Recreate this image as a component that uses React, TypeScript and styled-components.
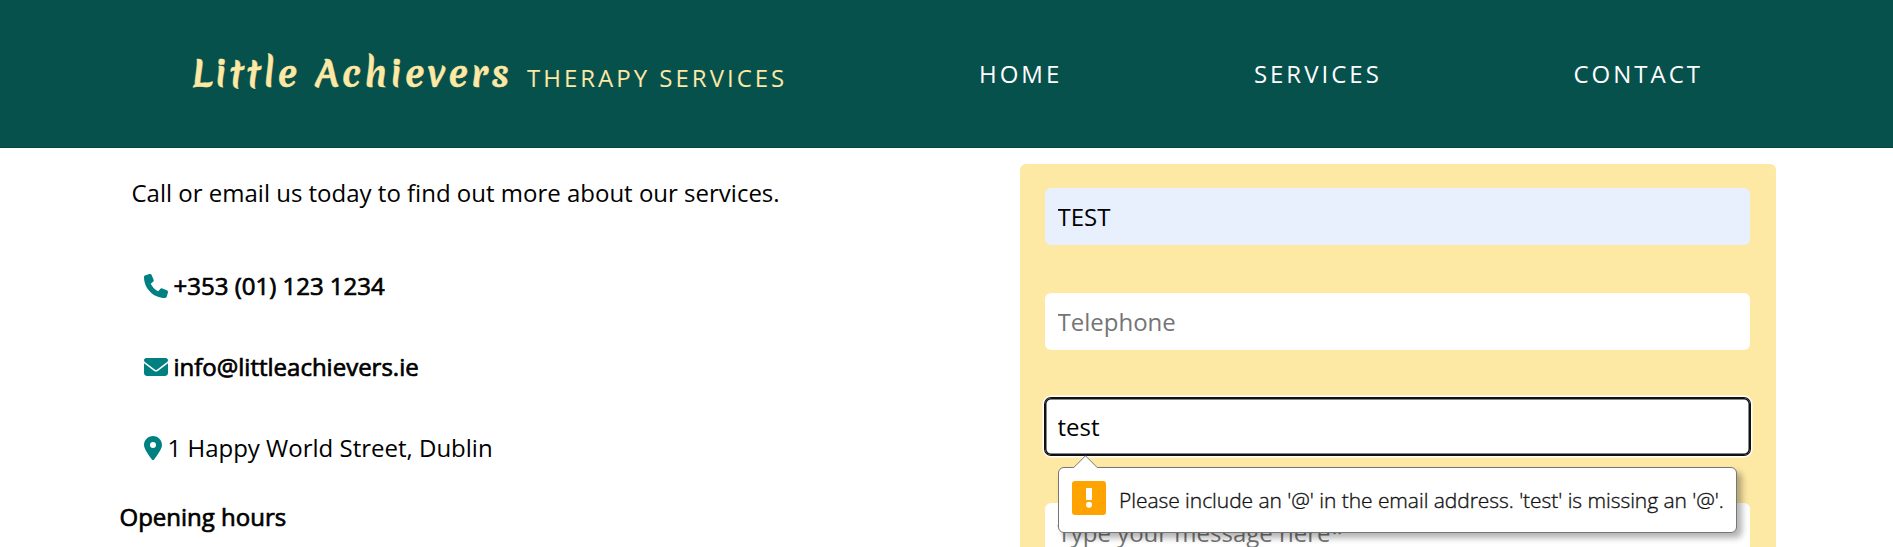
import React from 'react';
import styled, { createGlobalStyle } from 'styled-components';
import { FaPhone, FaEnvelope, FaLocationDot } from 'react-icons/fa6';

const GlobalStyle = createGlobalStyle`
  *, *::before, *::after { box-sizing: border-box; }
  body {
    margin: 0;
    background: #fff;
    color: #000;
    font: 400 24px/36px 'Open Sans', 'Noto Sans', sans-serif;
    overflow: hidden;
  }
`;

const Page = styled.div`
  height: 547px;
  overflow: hidden;
`;

const Header = styled.header`
  display: flex;
  height: 148px;
  padding: 0 190px 0 192px;
  background: #07514d;
  border-bottom: 1px solid #064643;
  white-space: nowrap;
`;

const Brand = styled.div`
  display: flex;
  align-items: baseline;
  width: 787px;
  padding-top: 49px;
  color: #fde8a4;
`;

const BrandName = styled.span`
  width: 335px;
  font: 700 36px/48px 'Merienda', 'Lato', cursive;
  letter-spacing: 3.15px;
  -webkit-text-stroke: 0.5px #fde8a4;
`;

const BrandTag = styled.span`
  letter-spacing: 3px;
`;

const Nav = styled.nav`
  display: flex;
  flex: 1;
  justify-content: space-between;
  padding-top: 56px;
`;

const NavLink = styled.a`
  color: #fff;
  letter-spacing: 3px;
`;

const Main = styled.main`
  display: flex;
  align-items: flex-start;
  white-space: nowrap;
`;

const Info = styled.section`
  width: 1020px;
  padding: 27px 0 0 119.5px;
`;

const Intro = styled.p`
  margin: 0 0 57px 12px;
`;

const ContactRow = styled.div<{ $strong?: boolean; $iconWidth?: number }>`
  display: flex;
  align-items: center;
  gap: 6px;
  height: 36px;
  margin: 0 0 45px 24px;
  -webkit-text-stroke: ${(p) => (p.$strong ? '0.7px #000' : '0')};

  svg {
    flex: none;
    width: ${(p) => p.$iconWidth ?? 24}px;
    height: 24px;
    color: #008080;
  }
`;

const Hours = styled.h2`
  margin: -12px 0 0;
  font: inherit;
  -webkit-text-stroke: 0.7px #000;
`;

const Form = styled.form`
  display: flex;
  flex-direction: column;
  gap: 48px;
  width: 756px;
  height: 500px;
  margin-top: 16px;
  padding: 24px 26px 0 25px;
  border-radius: 6px;
  background: #fde8a4;
`;

const FieldWrap = styled.div`
  position: relative;
`;

const Field = styled.input<{ $filled?: boolean; $focused?: boolean }>`
  display: block;
  width: 100%;
  height: 57px;
  padding: 1px 12.5px;
  border: 0;
  border-radius: 6px;
  outline: 0;
  background: ${(p) => (p.$filled ? '#e8effd' : '#fff')};
  box-shadow: ${(p) =>
    p.$focused ? 'inset 0 0 0 1.5px #101010, 0 0 0 1px #101010, 0 0 0 2.5px #fff' : 'none'};
  color: #000;
  font: inherit;
  &::placeholder { color: #757575; opacity: 1; }
`;

const Message = styled.textarea`
  display: block;
  width: 100%;
  height: 150px;
  padding: 12px 12.5px;
  border: 0;
  border-radius: 6px;
  resize: none;
  font: inherit;
  &::placeholder { color: #757575; opacity: 1; }
`;

const Tooltip = styled.div`
  position: absolute;
  z-index: 2;
  top: 69px;
  left: 13px;
  display: flex;
  align-items: center;
  width: 679px;
  height: 66px;
  padding: 0 13px 4px;
  border: 1px solid #767676;
  border-radius: 6px;
  background: #fff;
  box-shadow: 5px 5px 6px rgba(0, 0, 0, 0.3);
  font: 300 21px/28px 'Open Sans', 'Noto Sans', sans-serif;
  letter-spacing: -0.05px;
`;

const Arrow = styled.svg`
  position: absolute;
  top: -13px;
  left: 14px;
`;

const Warning = styled.svg`
  flex: none;
  margin-right: 13px;
`;

const TooltipText = styled.span`
  padding-top: 4px;
  color: #111;
  -webkit-text-stroke: 0.35px #111;
`;

export default function App() {
  return (
    <Page>
      <GlobalStyle />
      <Header>
        <Brand>
          <BrandName>Little Achievers</BrandName>
          <BrandTag>THERAPY SERVICES</BrandTag>
        </Brand>
        <Nav>
          <NavLink>HOME</NavLink>
          <NavLink>SERVICES</NavLink>
          <NavLink>CONTACT</NavLink>
        </Nav>
      </Header>
      <Main>
        <Info>
          <Intro>Call or email us today to find out more about our services.</Intro>
          <ContactRow $strong>
            <FaPhone />
            <span>+353 (01) 123 1234</span>
          </ContactRow>
          <ContactRow $strong>
            <FaEnvelope />
            <span>info@littleachievers.ie</span>
          </ContactRow>
          <ContactRow $iconWidth={18}>
            <FaLocationDot />
            <span>1 Happy World Street, Dublin</span>
          </ContactRow>
          <Hours>Opening hours</Hours>
        </Info>
        <Form>
          <Field $filled defaultValue="TEST" />
          <Field placeholder="Telephone" />
          <FieldWrap>
            <Field $focused defaultValue="test" />
            <Tooltip>
              <Arrow width="26" height="14" viewBox="0 0 26 14">
                <path d="M0.5 14V12.8L12.5 0.8L24.5 12.8V14Z" fill="#fff" />
                <path d="M0.5 12.8L12.5 0.8L24.5 12.8" fill="none" stroke="#767676" />
              </Arrow>
              <Warning width="34" height="34" viewBox="0 0 34 34">
                <rect width="34" height="34" rx="3" fill="#ffa300" />
                <rect x="14" y="7" width="6" height="12" fill="#fff" />
                <circle cx="17" cy="23.7" r="3" fill="#fff" />
              </Warning>
              <TooltipText>
                Please include an '@' in the email address. 'test' is missing an '@'.
              </TooltipText>
            </Tooltip>
          </FieldWrap>
          <Message placeholder="Type your message here*" />
        </Form>
      </Main>
    </Page>
  );
}
